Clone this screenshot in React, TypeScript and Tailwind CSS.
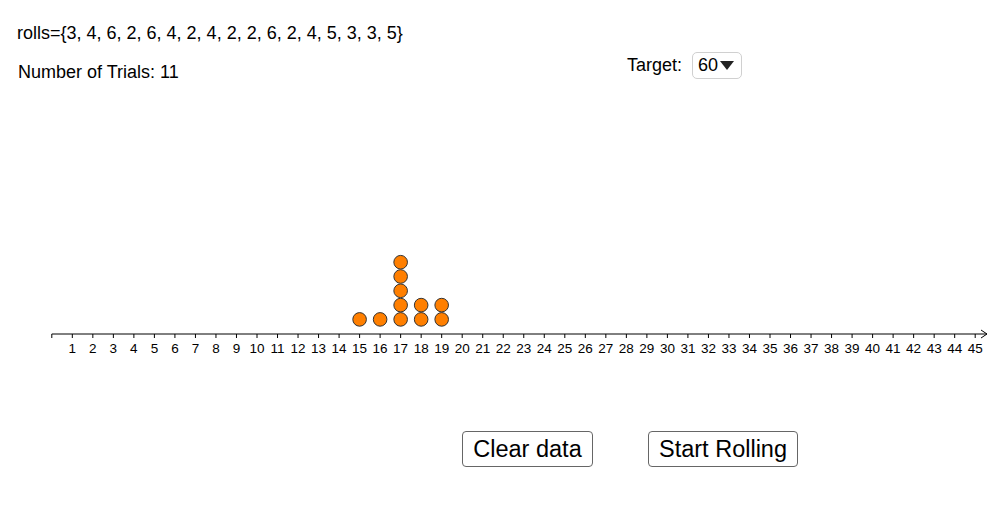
import React from 'react';

const rolls = [3, 4, 6, 2, 6, 4, 2, 4, 2, 2, 6, 2, 4, 5, 3, 3, 5];
const sums: Record<number, number> = { 15: 1, 16: 1, 17: 5, 18: 2, 19: 2 };

const X0 = 51.8;
const UNIT = 20.52;
const AXIS_Y = 94;

function DotPlot() {
    const ticks = Array.from({ length: 45 }, (_, i) => i + 1);
    const dots: { x: number; y: number; key: string }[] = [];
    Object.entries(sums).forEach(([v, n]) => {
        for (let i = 0; i < n; i++) {
            dots.push({ x: X0 + Number(v) * UNIT, y: 79.4 - i * 14.3, key: `${v}-${i}` });
        }
    });

    return (
        <svg width={989} height={130} className="block" style={{ fontFamily: '"Liberation Sans", Arial, sans-serif' }}>
            <line x1={X0} y1={AXIS_Y} x2={987} y2={AXIS_Y} stroke="#000" strokeWidth={1} />
            <polyline points={`981,${AXIS_Y - 4} 987,${AXIS_Y} 981,${AXIS_Y + 4}`} fill="none" stroke="#000" strokeWidth={1} />
            <line x1={X0} y1={AXIS_Y} x2={X0} y2={AXIS_Y + 4} stroke="#000" strokeWidth={1} />
            {ticks.map((t) => (
                <g key={t}>
                    <line x1={X0 + t * UNIT} y1={AXIS_Y} x2={X0 + t * UNIT} y2={AXIS_Y + 4} stroke="#000" strokeWidth={1} />
                    <text x={X0 + t * UNIT} y={112.5} fontSize={13.5} textAnchor="middle" fill="#000">
                        {t}
                    </text>
                </g>
            ))}
            {dots.map((d) => (
                <circle key={d.key} cx={d.x} cy={d.y} r={6.8} fill="#ff7f00" stroke="#333" strokeWidth={1} />
            ))}
        </svg>
    );
}

export default function App() {
    return (
        <div className="w-[989px] h-[511px] overflow-hidden bg-white text-black font-['Liberation_Sans',Arial,sans-serif]">
            <div className="pl-[17px] pt-[23px] text-[18px] leading-[21px]">
                rolls={'{'}{rolls.join(', ')}{'}'}
            </div>

            <div className="mt-[8px] flex items-start">
                <div className="pl-[18px] pt-[10px] text-[18px] leading-[21px]">Number of Trials: 11</div>
                <div className="ml-auto mr-[247px] flex items-center gap-[10px]">
                    <span className="text-[18px] leading-[21px]">Target:</span>
                    <div className="flex h-[27px] w-[50px] items-center gap-[2px] rounded-[5px] border border-[#d0d0d0] pl-[5px] text-[18px] leading-[21px]">
                        <span>60</span>
                        <svg width="14" height="9" viewBox="0 0 14 9">
                            <path d="M0 0 L14 0 L7 9 Z" fill="#222" />
                        </svg>
                    </div>
                </div>
            </div>

            <div className="mt-[157px]">
                <DotPlot />
            </div>

            <div className="mt-[61px] flex">
                <button className="ml-[462px] h-[36px] w-[131px] rounded-[4px] border border-[#666] bg-white pt-[1px] text-[23.5px] leading-none">
                    Clear data
                </button>
                <button className="ml-[55px] h-[36px] w-[150px] rounded-[4px] border border-[#666] bg-white pt-[1px] text-[23.5px] leading-none">
                    Start Rolling
                </button>
            </div>
        </div>
    );
}
